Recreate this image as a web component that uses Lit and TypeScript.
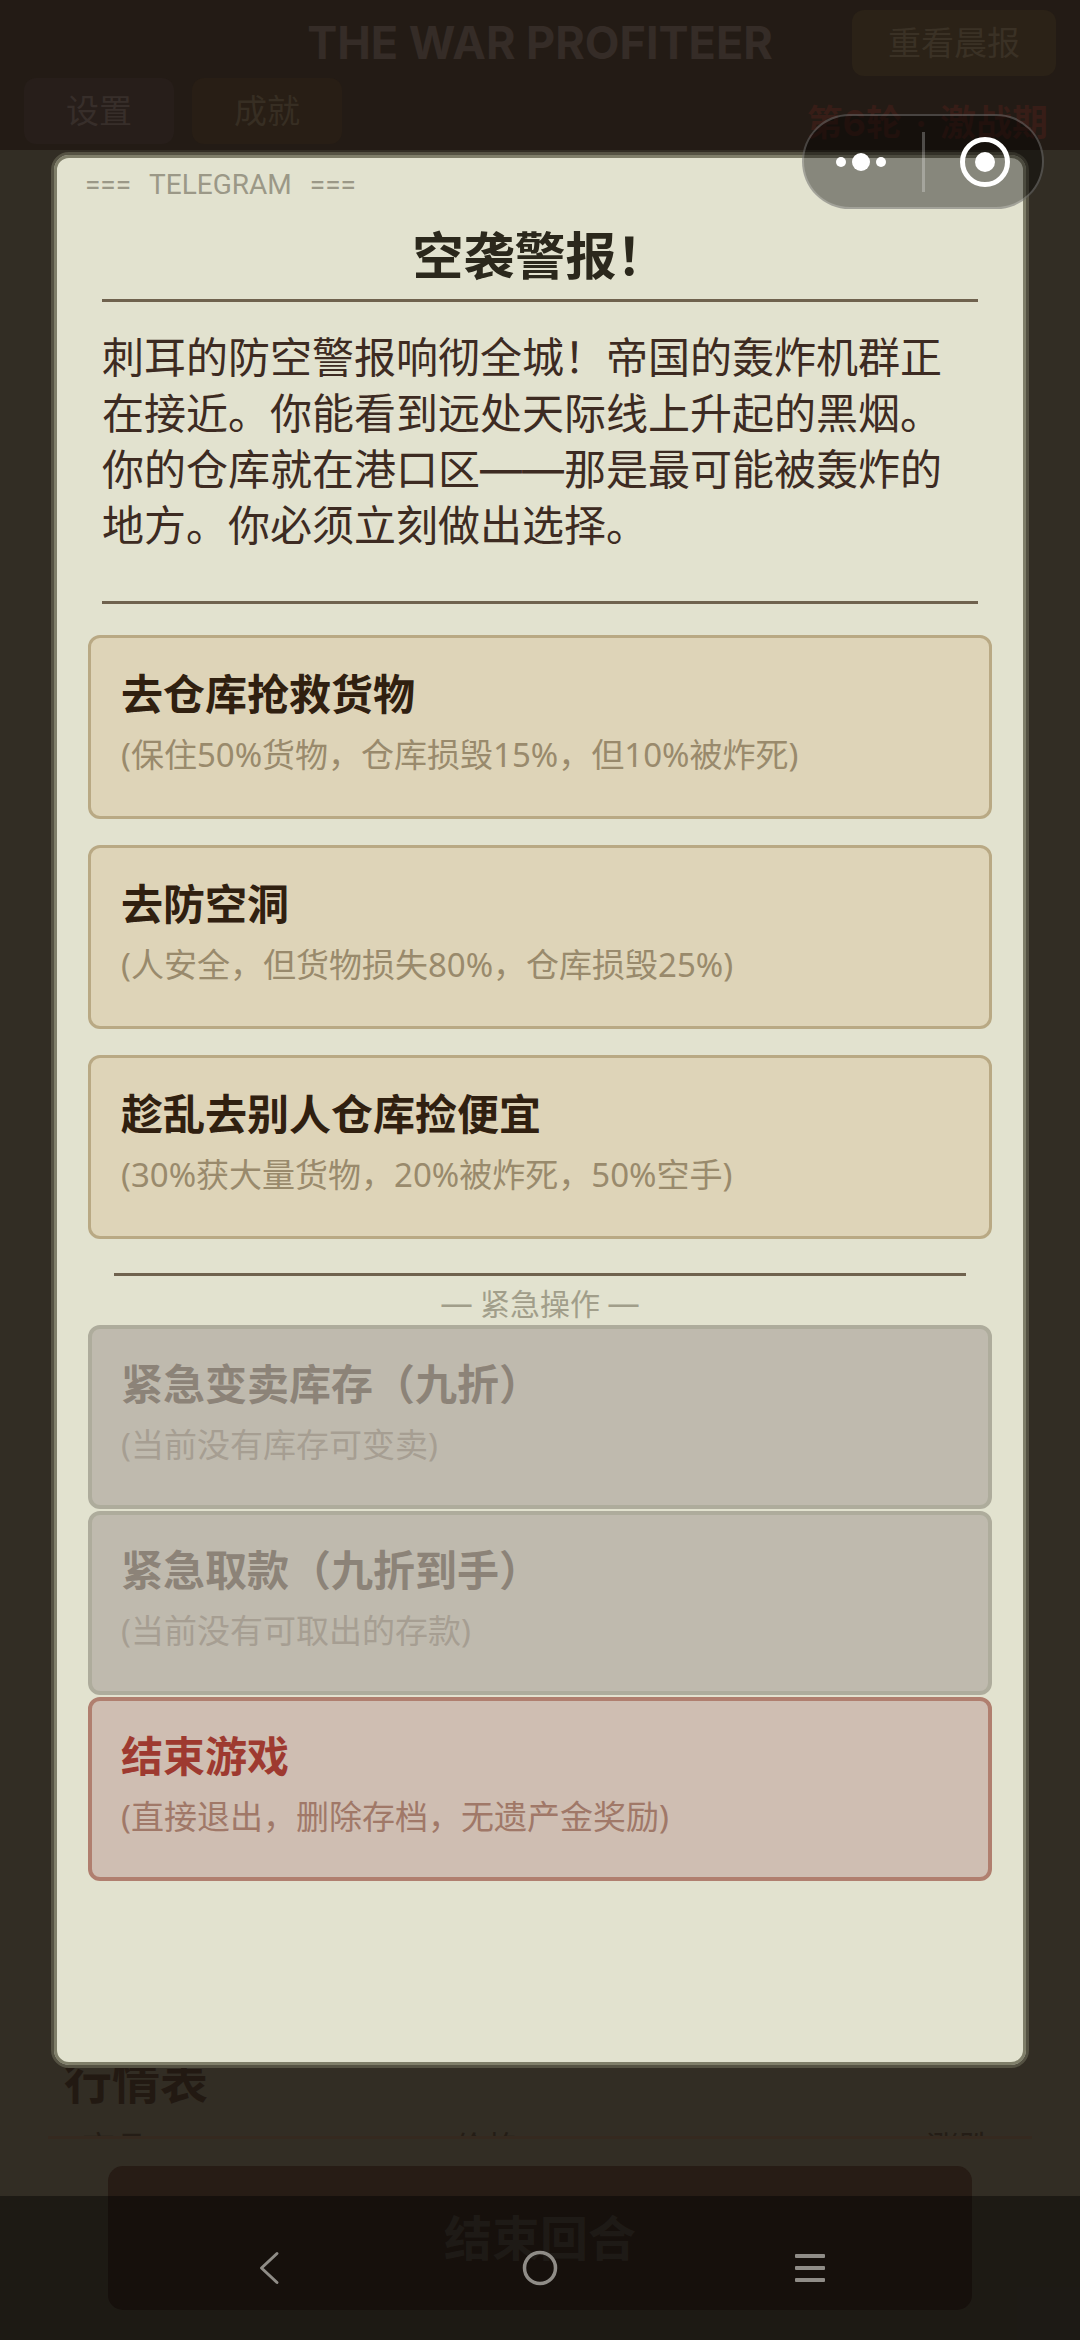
import { LitElement, html, css, svg } from "lit";
import { customElement, property } from "lit/decorators.js";

interface Choice {
  title: string;
  note: string;
  tone: "normal" | "muted" | "danger";
}

const CHOICES: Choice[] = [
  { title: "去仓库抢救货物", note: "(保住50%货物，仓库损毁15%，但10%被炸死)", tone: "normal" },
  { title: "去防空洞", note: "(人安全，但货物损失80%，仓库损毁25%)", tone: "normal" },
  { title: "趁乱去别人仓库捡便宜", note: "(30%获大量货物，20%被炸死，50%空手)", tone: "normal" },
];

const EMERGENCY: Choice[] = [
  { title: "紧急变卖库存（九折）", note: "(当前没有库存可变卖)", tone: "muted" },
  { title: "紧急取款（九折到手）", note: "(当前没有可取出的存款)", tone: "muted" },
  { title: "结束游戏", note: "(直接退出，删除存档，无遗产金奖励)", tone: "danger" },
];

@customElement("choice-card")
export class ChoiceCard extends LitElement {
  @property({ attribute: false }) choice!: Choice;

  static styles = css`
    :host {
      display: block;
    }
    .card {
      display: flex;
      flex-direction: column;
      width: 100%;
      height: 184px;
      box-sizing: border-box;
      padding: 29px 30px 0;
      border: 3px solid #b9a984;
      border-radius: 12px;
      background: #ded4b8;
      color: #302010;
      font: inherit;
      text-align: left;
      cursor: pointer;
    }
    .title {
      font-size: 42px;
      line-height: 56px;
      font-weight: 700;
    }
    .note {
      font-family: "Noto Sans", "Noto Sans CJK SC", sans-serif;
      font-size: 33px;
      line-height: 64px;
      color: #998a6c;
    }
    .muted {
      padding: 28px 29px 0;
      border: 4px solid #aeac9c;
      background: #bfbaae;
      color: #8c8378;
      cursor: default;
    }
    .muted .note {
      color: #a69e92;
    }
    .danger {
      padding: 28px 29px 0;
      border: 4px solid #b07f6f;
      background: #cfbeb2;
      color: #9e3a30;
    }
    .danger .note {
      color: #a07868;
    }
  `;

  render() {
    const { title, note, tone } = this.choice;
    return html`<button class="card ${tone}" type="button" ?disabled=${tone === "muted"}>
      <span class="title">${title}</span>
      <span class="note">${note}</span>
    </button>`;
  }
}

const moreIcon = svg`<svg width="60" height="60" viewBox="0 0 60 60" fill="#fff">
  <circle cx="10" cy="30" r="5"/><circle cx="30" cy="30" r="9"/><circle cx="50" cy="30" r="5"/></svg>`;
const targetIcon = svg`<svg width="60" height="60" viewBox="0 0 60 60">
  <circle cx="30" cy="30" r="22.5" fill="none" stroke="#fff" stroke-width="5"/><circle cx="30" cy="30" r="10" fill="#fff"/></svg>`;
const backIcon = svg`<svg width="48" height="48" viewBox="0 0 48 48" fill="none" stroke="#8f8c87" stroke-width="3" stroke-linecap="round" stroke-linejoin="round">
  <path d="M31 9.500 L15.500 24 L31 38.500"/></svg>`;
const homeIcon = svg`<svg width="48" height="48" viewBox="0 0 48 48" fill="none" stroke="#8f8c87" stroke-width="3.500">
  <circle cx="24" cy="24" r="15.500"/></svg>`;
const menuIcon = svg`<svg width="48" height="48" viewBox="0 0 48 48" fill="#8f8c87">
  <rect x="9" y="10" width="30" height="4" rx="1"/><rect x="9" y="22" width="30" height="4" rx="1"/><rect x="9" y="34" width="30" height="4" rx="1"/></svg>`;

@customElement("app-root")
export class AppRoot extends LitElement {
  static styles = css`
    :host {
      display: block;
      font-family: Inter, "Noto Sans CJK SC", sans-serif;
    }
    button {
      font: inherit;
      border: 0;
      padding: 0;
      cursor: pointer;
    }
    .screen {
      position: relative;
      display: flex;
      flex-direction: column;
      min-height: 100vh;
      background: #322d24;
      overflow: hidden;
    }
    .header {
      display: flex;
      flex-direction: column;
      height: 150px;
      box-sizing: border-box;
      padding: 9px 24px 6px;
      gap: 3px;
      background: #231b15;
    }
    .row {
      display: grid;
      grid-template-columns: 204px 1fr 204px;
      align-items: center;
      height: 66px;
    }
    .game {
      grid-column: 2;
      margin: 0;
      text-align: center;
      white-space: nowrap;
      font-size: 45px;
      line-height: 68px;
      font-weight: 700;
      color: #352c27;
    }
    .tool {
      height: 66px;
      border-radius: 12px;
      font-size: 33px;
      line-height: 66px;
      background: #281e15;
      color: #372e23;
    }
    .tool.news {
      background: #2b2217;
      color: #3a3125;
    }
    .tool.settings {
      background: #271e1a;
      color: #372e2a;
    }
    .tools {
      display: grid;
      grid-template-columns: 150px 150px 1fr;
      gap: 18px;
    }
    .phase {
      display: flex;
      justify-content: flex-end;
      gap: 13px;
      padding-right: 8px;
      font-size: 36px;
      line-height: 90px;
      font-weight: 700;
      color: #371d17;
    }
    .market {
      margin-top: auto;
      padding: 0 48px;
    }
    .market-title {
      margin: 0;
      padding-left: 16px;
      font-size: 48px;
      line-height: 72px;
      color: #221912;
    }
    .columns {
      display: grid;
      grid-template-columns: 371fr 472fr 66px;
      height: 6px;
      margin-top: 12px;
      padding: 0 40px 0 34px;
      overflow: hidden;
      border-bottom: 3px solid #35291f;
      font-size: 33px;
      line-height: 36px;
      color: #241d16;
    }
    .end-turn {
      height: 144px;
      box-sizing: border-box;
      margin: 27px 108px 30px;
      padding-bottom: 6px;
      border-radius: 15px;
      background: #271c15;
      color: #352e27;
      font-size: 48px;
      font-weight: 700;
    }
    .dialog {
      position: absolute;
      top: 152px;
      bottom: 272px;
      left: 51px;
      right: 51px;
      box-sizing: border-box;
      padding: 0 28px;
      border: 3px solid #555243;
      border-radius: 18px;
      background: #e2e2cf;
      box-shadow: inset 0 0 0 3px #7f7e69;
    }
    .telegram {
      display: flex;
      gap: 18px;
      padding: 8px 3px 0;
      font-family: Roboto, sans-serif;
      font-size: 28px;
      line-height: 44px;
      color: #9b9887;
    }
    .headline {
      margin: 0 20px;
      padding: 12px 0 5px;
      text-align: center;
      font-size: 51px;
      line-height: 75px;
      color: #2b281c;
      border-bottom: 3px solid #6f624e;
    }
    .story {
      margin: 0 20px;
      padding: 28px 0 47px;
      font-size: 42px;
      line-height: 56px;
      color: #3d2b22;
      border-bottom: 3px solid #6f624e;
    }
    .choices {
      display: flex;
      flex-direction: column;
      gap: 26px;
      margin: 31px 6px 0;
    }
    .emergency {
      margin: 34px 32px 0;
      padding-top: 8px;
      border-top: 3px solid #6f624e;
      text-align: center;
      font-size: 30px;
      line-height: 41px;
      color: #a19e8a;
    }
    .choices.tight {
      gap: 2px;
      margin-top: 0;
    }
    .capsule {
      position: absolute;
      top: 114px;
      right: 36px;
      display: flex;
      align-items: center;
      justify-content: space-between;
      width: 242px;
      height: 95px;
      box-sizing: border-box;
      padding: 0 27px;
      border: 2px solid rgba(255, 255, 255, 0.22);
      border-radius: 48px;
      background: rgba(0, 0, 0, 0.4);
    }
    .capsule button,
    .nav button {
      display: flex;
      justify-content: center;
      background: none;
    }
    .split {
      width: 3px;
      height: 60px;
      background: rgba(255, 255, 255, 0.25);
    }
    .nav {
      position: absolute;
      left: 0;
      right: 0;
      bottom: 0;
      display: grid;
      grid-template-columns: repeat(3, 1fr);
      align-items: center;
      height: 144px;
      box-sizing: border-box;
      padding: 0 12.5%;
      background: rgba(0, 0, 0, 0.42);
    }
  `;

  render() {
    return html`<div class="screen">
      <header class="header">
        <div class="row">
          <h1 class="game">THE WAR PROFITEER</h1>
          <button class="tool news" type="button">重看晨报</button>
        </div>
        <div class="tools">
          <button class="tool settings" type="button">设置</button>
          <button class="tool" type="button">成就</button>
          <div class="phase"><span>第6轮</span><span>·</span><span>激战期</span></div>
        </div>
      </header>
      <section class="market">
        <h2 class="market-title">行情表</h2>
        <div class="columns"><span>商品</span><span>价格</span><span>涨跌</span></div>
      </section>
      <button class="end-turn" type="button">结束回合</button>

      <section class="dialog" role="dialog" aria-labelledby="headline">
        <div class="telegram"><span>===</span><span>TELEGRAM</span><span>===</span></div>
        <h2 class="headline" id="headline">空袭警报！</h2>
        <div class="story">刺耳的防空警报响彻全城！帝国的轰炸机群正在接近。你能看到远处天际线上升起的黑烟。你的仓库就在港口区——那是最可能被轰炸的地方。你必须立刻做出选择。</div>
        <div class="choices">
          ${CHOICES.map((c) => html`<choice-card .choice=${c}></choice-card>`)}
        </div>
        <div class="emergency">— 紧急操作 —</div>
        <div class="choices tight">
          ${EMERGENCY.map((c) => html`<choice-card .choice=${c}></choice-card>`)}
        </div>
      </section>

      <div class="capsule">
        <button type="button" aria-label="更多">${moreIcon}</button>
        <span class="split"></span>
        <button type="button" aria-label="关闭">${targetIcon}</button>
      </div>
      <nav class="nav">
        <button type="button" aria-label="返回">${backIcon}</button>
        <button type="button" aria-label="主页">${homeIcon}</button>
        <button type="button" aria-label="菜单">${menuIcon}</button>
      </nav>
    </div>`;
  }
}
